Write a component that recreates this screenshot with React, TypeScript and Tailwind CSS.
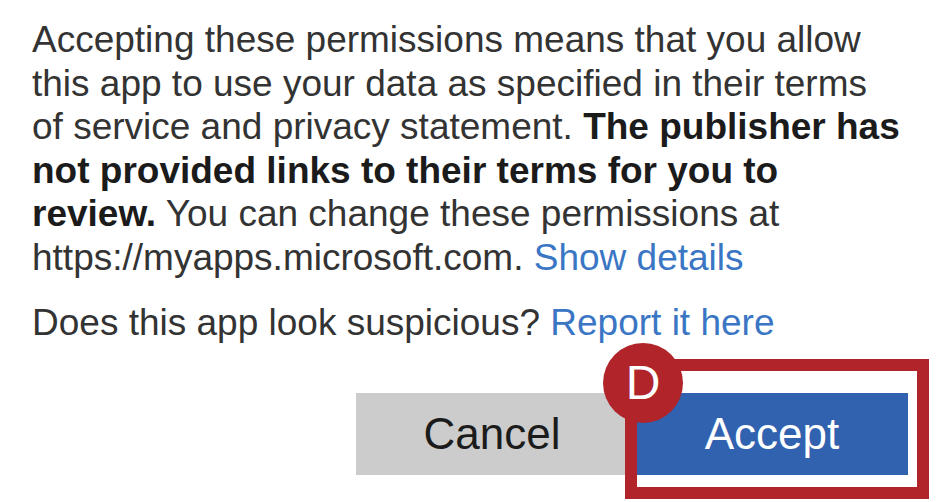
export default function App() {
  return (
    <div className="relative h-[502px] w-[942px] overflow-hidden bg-white pl-[32px] pr-[34px] pt-[18px] font-['Liberation_Sans',Arial,sans-serif] text-[#333333]">
      <p className="text-[37px] leading-[43.5px] whitespace-nowrap">
        Accepting these permissions means that you allow
        <br />
        this app to use your data as specified in their terms
        <br />
        of service and privacy statement.{" "}
        <b className="font-bold text-[#1b1b1b]">The publisher has</b>
        <br />
        <b className="font-bold text-[#1b1b1b]">not provided links to their terms for you to</b>
        <br />
        <b className="font-bold text-[#1b1b1b]">review.</b> You can change these permissions at
        <br />
        https://myapps.microsoft.com.{" "}
        <a className="text-[#3a76c4]" href="#">
          Show details
        </a>
      </p>

      <p className="mt-[22px] text-[37px] leading-[43.5px] whitespace-nowrap">
        Does this app look suspicious?{" "}
        <a className="text-[#3a76c4]" href="#">
          Report it here
        </a>
      </p>

      <div className="mt-[48px] flex justify-end gap-[8px]">
        <button
          type="button"
          className="flex h-[82px] w-[272px] items-center justify-center bg-[#cccccc] text-[44px] text-[#1b1b1b]"
        >
          Cancel
        </button>
        <div className="relative">
          <button
            type="button"
            className="flex h-[82px] w-[272px] items-center justify-center bg-[#3162b0] text-[44px] text-white"
          >
            Accept
          </button>
          <div className="pointer-events-none absolute -top-[34px] -left-[11px] -right-[21px] -bottom-[24px] border-[12px] border-[#b0242a]" />
          <div className="pointer-events-none absolute -top-[50px] -left-[33px] flex h-[80px] w-[80px] items-center justify-center rounded-full bg-[#b0242a] text-[48px] leading-none text-white">
            D
          </div>
        </div>
      </div>
    </div>
  );
}
